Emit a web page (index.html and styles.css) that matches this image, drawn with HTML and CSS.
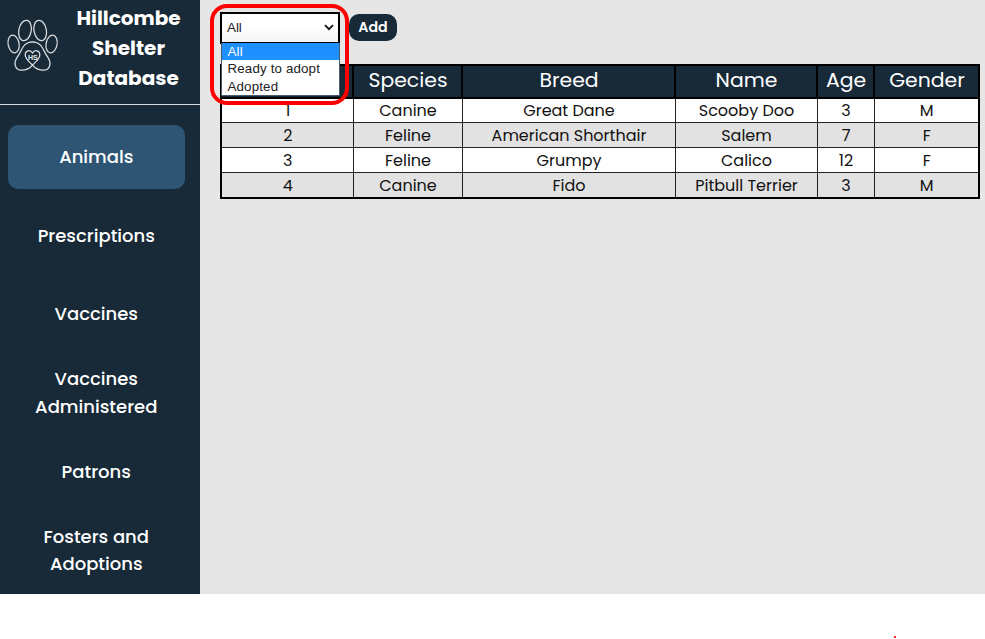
FILE: index.html
```html
<!DOCTYPE html>
<html lang="en">
<head>
<meta charset="utf-8">
<title>Hillcombe Shelter Database</title>
<link rel="stylesheet" href="styles.css">
</head>
<body>
<div class="app">
  <aside class="sidebar">
    <header class="brand">
      <svg class="logo" viewBox="0 0 66 66" width="66" height="66" fill="none" stroke="#d9dee2" stroke-width="1.25">
        <ellipse cx="25" cy="20.5" rx="6.2" ry="10.3" transform="rotate(11 25 20.5)"/>
        <ellipse cx="40.2" cy="20.5" rx="6.2" ry="10.3" transform="rotate(-11 40.2 20.5)"/>
        <ellipse cx="13.6" cy="34" rx="5.5" ry="9" transform="rotate(-10 13.6 34)"/>
        <ellipse cx="51.6" cy="34" rx="5.5" ry="9" transform="rotate(10 51.6 34)"/>
        <path d="M32.5 55.2C29 59.5 25 60.5 20.5 60.2C15 59.5 13.3 53 17 47.5C22 41.5 22 32.2 32.5 31.8C43 32.2 43 41.5 48 47.5C51.7 53 50 59.5 44.5 60.2C40 60.5 36 59.5 32.5 55.2C29 51.5 25.3 49 25.2 45C25.3 40 30.5 39.5 32.5 43C34.5 39.5 39.9 40 39.8 45C39.7 49 36 51.5 32.5 55.2Z"/>
        <text class="logo-text" x="32.8" y="49.7" text-anchor="middle">HS</text>
      </svg>
      <h1 class="title">Hillcombe<br>Shelter<br>Database</h1>
    </header>
    <nav class="nav">
      <a class="item active"><span>Animals</span></a>
      <a class="item"><span>Prescriptions</span></a>
      <a class="item"><span>Vaccines</span></a>
      <a class="item"><span>Vaccines<br>Administered</span></a>
      <a class="item"><span>Patrons</span></a>
      <a class="item"><span>Fosters and<br>Adoptions</span></a>
    </nav>
  </aside>
  <main class="content">
    <div class="toolbar">
      <div class="filter">
        <div class="select"><span>All</span>
          <svg width="10" height="7" viewBox="0 0 10 7" fill="none" stroke="#111" stroke-width="1.8"><path d="M1 1.2L5 5.2L9 1.2"/></svg>
        </div>
        <div class="options">
          <div class="option selected">All</div>
          <div class="option">Ready to adopt</div>
          <div class="option">Adopted</div>
        </div>
        <div class="highlight"></div>
      </div>
      <button class="add">Add</button>
    </div>
    <table class="animals">
      <colgroup><col class="c-id"><col class="c-species"><col class="c-breed"><col class="c-name"><col class="c-age"><col class="c-gender"></colgroup>
      <thead><tr><th></th><th>Species</th><th>Breed</th><th>Name</th><th>Age</th><th>Gender</th></tr></thead>
      <tbody>
        <tr><td>1</td><td>Canine</td><td>Great Dane</td><td>Scooby Doo</td><td>3</td><td>M</td></tr>
        <tr><td>2</td><td>Feline</td><td>American Shorthair</td><td>Salem</td><td>7</td><td>F</td></tr>
        <tr><td>3</td><td>Feline</td><td>Grumpy</td><td>Calico</td><td>12</td><td>F</td></tr>
        <tr><td>4</td><td>Canine</td><td>Fido</td><td>Pitbull Terrier</td><td>3</td><td>M</td></tr>
      </tbody>
    </table>
  </main>
</div>
<div class="footer"><i class="dot"></i></div>
</body>
</html>
```
FILE: styles.css
```css
* { box-sizing: border-box; }
body { margin: 0; background: #fff; font-family: Poppins, Inter, sans-serif; overflow: hidden; }
.app { display: flex; height: 594px; background: #e6e6e6; }
.sidebar { width: 200px; flex: none; background: #182a38; color: #fff; }
.brand { display: flex; height: 105px; border-bottom: 1px solid #d5dade; }
.logo { flex: none; margin-top: 10px; }
.logo-text { font: bold 7px "Liberation Sans", sans-serif; fill: #e6eaed; stroke: none; }
.title { margin: 2.6px 0 0; width: 125px; font-size: 20px; line-height: 30.3px; font-weight: 700; text-align: center; }
.nav { display: flex; flex-direction: column; gap: 14.7px; padding: 20px 15.5px 0 8px; }
.item { display: flex; align-items: center; justify-content: center; height: 64px; padding-bottom: 1px; border-radius: 10px; text-align: center; font-size: 18px; font-weight: 500; line-height: 27.3px; }
.active { background: #2e5674; }
.content { flex: 1; padding: 12px 5px 0 20px; }
.toolbar { display: flex; align-items: flex-start; gap: 9px; height: 51.5px; }
.filter { position: relative; width: 120px; font: 13.33px "Liberation Sans", sans-serif; color: #222; }
.select { display: flex; align-items: center; justify-content: space-between; height: 32px; padding: 0 4px 2px 5px; border: 2px solid #000; background: linear-gradient(#fff 50%, #f4f4f4); }
.options { position: absolute; z-index: 2; top: 31px; left: 1px; width: 119px; height: 53px; background: #fff; border: 1px solid #4b5a66; border-top: 0; letter-spacing: 0.15px; }
.option { height: 17.3px; line-height: 17px; padding-left: 5.5px; }
.selected { background: #1e90ff; color: #fff; }
.highlight { position: absolute; z-index: 3; left: -10px; top: -8px; width: 139px; height: 101px; border: 4px solid #f00; border-radius: 17px; }
.add { margin-top: 2px; width: 48px; height: 27px; padding: 0; border: 0; border-radius: 10px; background: #182a38; color: #fff; font: 600 14.2px Poppins, Inter, sans-serif; }
.animals { width: 760px; height: 135.5px; table-layout: fixed; border-collapse: collapse; border: 2px solid #000; text-align: center; }
.c-id { width: 132px; }
.c-species { width: 109px; }
.c-breed { width: 213px; }
.c-name { width: 142px; }
.c-age { width: 57px; }
.c-gender { width: 105px; }
.animals th { height: 33px; padding: 0 0 2px 1px; border: 2px solid #000; background: #182a38; color: #fff; font-size: 20.4px; line-height: 28px; font-weight: 400; }
.animals td { height: 25px; padding: 0 0 0 1px; border: 1px solid #222; background: #fff; color: #111; font-size: 16px; line-height: 23px; }
.animals tr:nth-child(even) td { background: #e2e2e2; }
.footer { display: flex; justify-content: flex-end; padding: 42px 89px 0 0; }
.dot { width: 2px; height: 2px; background: #f22; }
```
